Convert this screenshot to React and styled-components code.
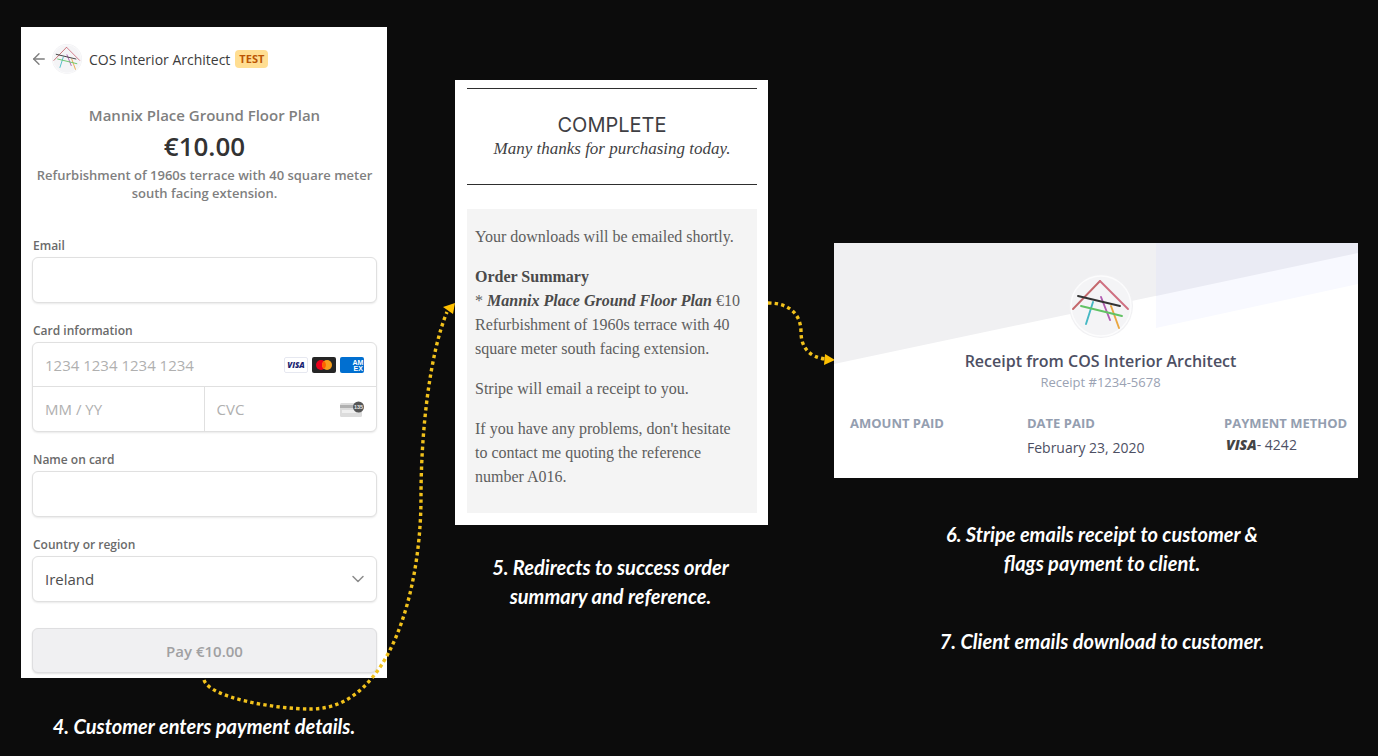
import React from "react";
import styled, { createGlobalStyle } from "styled-components";
import { ArrowLeft, ChevronDown } from "lucide-react";

const ui = `"Open Sans", "Noto Sans", sans-serif`;
const serif = `"Liberation Serif", serif`;

const GlobalStyle = createGlobalStyle`
  *, *::before, *::after { box-sizing: border-box; }
  body { margin: 0; background: #0c0c0c; font-family: ${ui}; }
  h1, h2, p, dl, dd, dt, figure { margin: 0; font-weight: inherit; }
`;

const Board = styled.main`
  display: grid;
  grid-template-columns: 366fr 68px 313fr 66px 524fr;
  align-items: start;
  padding: 27px 20px 0 21px;
`;

const Step = styled.figure`
  grid-column: ${(p) => p.$column};
  position: relative;
  min-width: 0;
  padding-top: ${(p) => p.$drop || 0}px;
`;

const Caption = styled.figcaption`
  padding: ${(p) => p.$pad};
  font: italic 700 20px/29px Lato, sans-serif;
  color: #fff;
  text-align: center;

  p + p { margin-top: 49px; }
`;

const Arrow = styled.svg`
  position: absolute;
  top: ${(p) => p.$top}px;
  left: ${(p) => p.$left};
  width: ${(p) => p.$width};
  height: ${(p) => p.$height}px;
  pointer-events: none;
  overflow: visible;
`;

const Checkout = styled.form`
  background: #fff;
  padding: 17px 10px 5px 11px;
`;

const Merchant = styled.header`
  display: flex;
  align-items: center;
  height: 30px;
  font-size: 14px;
  font-weight: 500;
  color: #3c3c3c;
`;

const BackLink = styled.a`
  display: flex;
  margin: 0 4px 0 -2px;
  color: #7d7d7d;
`;

const MerchantName = styled.span`
  margin: 0 5px 0 7px;
`;

const TestBadge = styled.span`
  padding: 0 4px;
  border-radius: 4px;
  background: #ffde92;
  color: #bb5504;
  font-size: 11px;
  font-weight: 700;
  line-height: 18px;
`;

const Product = styled.section`
  padding: 29px 0 33px;
  text-align: center;
  font-weight: 600;
  color: #7f7f7f;
`;

const ProductName = styled.h1`
  font-size: 15px;
  line-height: 24px;
`;

const Price = styled.p`
  font-size: 26px;
  line-height: 39px;
  color: #333;
`;

const ProductText = styled.p`
  font-size: 13px;
  line-height: 18px;
`;

const Field = styled.div`
  display: flex;
  flex-direction: column;
  margin-bottom: ${(p) => (p.$last ? 26 : 17)}px;
`;

const Label = styled.label`
  padding-left: 1px;
  font-size: 12px;
  font-weight: 600;
  line-height: 22px;
  color: #6a6a6a;
`;

const frame = `
  border: 1px solid #e0e0e0;
  border-radius: 6px;
  background: #fff;
  box-shadow: 0 1px 2px rgba(0, 0, 0, 0.09);
`;

const Input = styled.input`
  ${frame}
  width: 100%;
  height: 46px;
  padding: 0 12px;
  font: 15px ${ui};
  color: #4d4d4d;
`;

const CardGroup = styled.div`
  ${frame}
  display: grid;
  grid-template-columns: repeat(2, minmax(0, 1fr));
`;

const CardCell = styled.div`
  display: flex;
  align-items: center;
  height: 44px;
  padding: 0 12px;
  gap: 4px;
  ${(p) => p.$wide && "grid-column: 1 / -1; border-bottom: 1px solid #e0e0e0;"}
  ${(p) => p.$divided && "border-right: 1px solid #e0e0e0;"}

  svg { flex: none; }
`;

const CardInput = styled.input`
  flex: 1;
  min-width: 0;
  padding: 0;
  border: 0;
  background: none;
  font: 15px ${ui};
  color: #4d4d4d;

  &::placeholder { color: #b0b0b0; opacity: 1; }
`;

const SelectWrap = styled.div`
  ${frame}
  display: flex;
  align-items: center;
  position: relative;
  color: #8c8c8c;

  svg {
    position: absolute;
    right: 8px;
    pointer-events: none;
  }
`;

const Select = styled.select`
  appearance: none;
  width: 100%;
  height: 44px;
  padding: 0 12px;
  border: 0;
  background: none;
  font: 15px ${ui};
  color: #4d4d4d;
`;

const PayButton = styled.button`
  display: block;
  width: 100%;
  height: 45px;
  border: 1px solid #dedee0;
  border-radius: 6px;
  background: #f0f0f2;
  box-shadow: 0 1px 2px rgba(0, 0, 0, 0.12);
  font: 600 15px ${ui};
  color: #a0a0a2;
`;

const OrderCard = styled.article`
  padding: 8px 11px 12px 12px;
  background: #fff;
`;

const OrderHeader = styled.header`
  height: 97px;
  padding-top: 24px;
  border: solid #2e2e2e;
  border-width: 1px 0;
  text-align: center;
  color: #3f3f44;
`;

const OrderTitle = styled.h2`
  font: 400 20px/24px Inter, sans-serif;
`;

const Thanks = styled.p`
  font: italic 17px/24px ${serif};
`;

const OrderBody = styled.section`
  display: grid;
  gap: 16px;
  margin-top: 24px;
  padding: 16px 12px 24px 8px;
  background: #f4f4f4;
  font: 16px/24px ${serif};
  color: #5e5e5e;

  strong, em { color: #4a4a4a; }
  em { font-weight: 700; }
`;

const Receipt = styled.article`
  position: relative;
  min-height: 235px;
  padding: 31px 7px 18px 16px;
  background: #fff;
`;

const Backdrop = styled.svg`
  position: absolute;
  inset: 0 0 auto;
  width: 100%;
  height: 121px;
`;

const ReceiptHead = styled.header`
  position: relative;
  display: flex;
  flex-direction: column;
  align-items: center;
  color: #4d4f63;
`;

const ReceiptTitle = styled.h2`
  margin-top: 11px;
  font-size: 16px;
  font-weight: 600;
  line-height: 24px;
`;

const ReceiptNumber = styled.p`
  font-size: 13px;
  line-height: 18px;
  color: #9aa2b3;
`;

const Facts = styled.dl`
  display: grid;
  grid-template-columns: 177fr 197fr 127px;
  margin-top: 22px;
`;

const FactName = styled.dt`
  font-size: 13px;
  font-weight: 700;
  line-height: 20px;
  white-space: nowrap;
  color: #949eb0;
`;

const FactValue = styled.dd`
  padding: ${(p) => (p.$mark ? "2px 0 0 2px" : "5px 0 0")};
  font-size: 14px;
  line-height: 20px;
  color: #4d4f63;
`;

const VisaMark = styled.b`
  font-style: italic;
  font-weight: 800;
  color: #444;
`;

function Logo({ size }) {
  return (
    <svg width={size} height={size} viewBox="0 0 64 64" fill="none" aria-hidden="true">
      <circle cx="32" cy="32" r="32" fill="#f1f1f3" />
      <circle cx="32" cy="32" r="30" fill="#f4f4f6" stroke="#fcfcfd" strokeWidth="1.5" />
      <g strokeWidth="1.9" strokeLinecap="round">
        <path d="M4 35 31 7" stroke="#c4686c" />
        <path d="M31 7 59 35" stroke="#cf6f80" />
        <path d="M24 28 17 50" stroke="#45b8c4" />
        <path d="M32 23 41 46" stroke="#b05bb0" />
        <path d="M42 32 50 54" stroke="#eaa640" />
        <path d="M12 32 53 42" stroke="#62c264" />
        <path d="M9 22 51 32" stroke="#333" />
      </g>
    </svg>
  );
}

function Visa() {
  return (
    <svg width="24" height="16" viewBox="0 0 24 16" role="img" aria-label="Visa">
      <rect x="0.5" y="0.5" width="23" height="15" rx="1.5" fill="#fff" stroke="#e6e8f0" />
      <text x="12" y="11" textAnchor="middle" fontFamily="Open Sans" fontSize="8" fontWeight="800" fontStyle="italic" fill="#1a1f71">VISA</text>
    </svg>
  );
}

function Mastercard() {
  return (
    <svg width="24" height="16" viewBox="0 0 24 16" role="img" aria-label="Mastercard">
      <rect width="24" height="16" rx="2" fill="#252525" />
      <circle cx="9" cy="8" r="5" fill="#eb001b" />
      <circle cx="15" cy="8" r="5" fill="#f79e1b" />
      <path d="M12 4a5 5 0 0 1 0 8 5 5 0 0 1 0-8" fill="#ff5f00" />
    </svg>
  );
}

function Amex() {
  return (
    <svg width="24" height="16" viewBox="0 0 24 16" role="img" aria-label="American Express">
      <rect width="24" height="16" rx="2" fill="#016fd0" />
      <g fontFamily="Liberation Sans" fontSize="7" fontWeight="700" fill="#fff">
        <text x="12.5" y="8">AM</text>
        <text x="13.5" y="14">EX</text>
      </g>
    </svg>
  );
}

function CvcCard() {
  return (
    <svg width="24" height="17" viewBox="0 0 24 17" aria-hidden="true">
      <rect y="2" width="22" height="14" rx="1.5" fill="#dcdcdc" />
      <rect y="4" width="22" height="3" fill="#b0b0b0" />
      <rect x="2" y="9" width="16" height="3" fill="#efefef" />
      <circle cx="18.5" cy="6" r="5.5" fill="#555" />
      <text x="18.5" y="8" textAnchor="middle" fontFamily="Liberation Sans" fontSize="5.5" fontWeight="700" fill="#e8e8e8">135</text>
    </svg>
  );
}

const dots = { fill: "none", stroke: "#f2c21c", strokeWidth: 3.4, strokeDasharray: "3.4 3.2" };

export default function App() {
  return (
    <>
      <GlobalStyle />
      <Board>
        <Step $column="1">
          <Checkout onSubmit={(e) => e.preventDefault()}>
            <Merchant>
              <BackLink href="#back" aria-label="Back"><ArrowLeft size={18} strokeWidth={1.8} /></BackLink>
              <Logo size={30} />
              <MerchantName>COS Interior Architect</MerchantName>
              <TestBadge>TEST</TestBadge>
            </Merchant>
            <Product>
              <ProductName>Mannix Place Ground Floor Plan</ProductName>
              <Price>€10.00</Price>
              <ProductText>Refurbishment of 1960s terrace with 40 square meter south facing extension.</ProductText>
            </Product>
            <Field>
              <Label htmlFor="email">Email</Label>
              <Input id="email" type="email" />
            </Field>
            <Field>
              <Label htmlFor="card">Card information</Label>
              <CardGroup>
                <CardCell $wide>
                  <CardInput id="card" placeholder="1234 1234 1234 1234" />
                  <Visa /><Mastercard /><Amex />
                </CardCell>
                <CardCell $divided>
                  <CardInput aria-label="Expiry date" placeholder="MM / YY" />
                </CardCell>
                <CardCell>
                  <CardInput aria-label="Security code" placeholder="CVC" />
                  <CvcCard />
                </CardCell>
              </CardGroup>
            </Field>
            <Field>
              <Label htmlFor="name">Name on card</Label>
              <Input id="name" />
            </Field>
            <Field $last>
              <Label htmlFor="country">Country or region</Label>
              <SelectWrap>
                <Select id="country" defaultValue="Ireland"><option>Ireland</option></Select>
                <ChevronDown size={20} strokeWidth={1.8} />
              </SelectWrap>
            </Field>
            <PayButton type="submit" disabled>Pay €10.00</PayButton>
          </Checkout>
          <Caption $pad="34px 0 0">4. Customer enters payment details.</Caption>
          <Arrow $top={276} $left="50%" $width="calc(50% + 68px)" $height={410} viewBox="0 0 251 410" preserveAspectRatio="none" aria-hidden="true">
            <path {...dots} d="M0 377C6 395 71 406 107 406C186 406 217 287 217 194C217 127 226 50 243 9" />
            <path fill="#ffc000" d="M251 0 239 4 249 11Z" />
          </Arrow>
        </Step>

        <Step $column="3" $drop={53}>
          <OrderCard>
            <OrderHeader>
              <OrderTitle>COMPLETE</OrderTitle>
              <Thanks>Many thanks for purchasing today.</Thanks>
            </OrderHeader>
            <OrderBody>
              <p>Your downloads will be emailed shortly.</p>
              <p>
                <strong>Order Summary</strong><br />
                * <em>Mannix Place Ground Floor Plan</em> €10<br />
                Refurbishment of 1960s terrace with 40 square meter south facing extension.
              </p>
              <p>Stripe will email a receipt to you.</p>
              <p>If you have any problems, don't hesitate to contact me quoting the reference number A016.</p>
            </OrderBody>
          </OrderCard>
          <Caption $pad="28px 34px 0 32px">5. Redirects to success order summary and reference.</Caption>
          <Arrow $top={273} $left="100%" $width="66px" $height={66} viewBox="0 0 66 66" aria-hidden="true">
            <path {...dots} d="M0 3C22 3 33 15 33 32C33 48 42 57 57 59" />
            <path fill="#ffc000" d="M57 54 67 60 56 65Z" />
          </Arrow>
        </Step>

        <Step $column="5" $drop={216}>
          <Receipt>
            <Backdrop viewBox="0 0 524 121" preserveAspectRatio="none" aria-hidden="true">
              <path fill="#f0f0f2" d="M0 0H524V10L0 121Z" />
              <path fill="#f8f9ff" d="M322 0H524V41L322 85Z" />
              <path fill="#eaebf4" d="M322 0H524V10L322 53Z" />
            </Backdrop>
            <ReceiptHead>
              <Logo size={64} />
              <ReceiptTitle>Receipt from COS Interior Architect</ReceiptTitle>
              <ReceiptNumber>Receipt #1234-5678</ReceiptNumber>
            </ReceiptHead>
            <Facts>
              <div>
                <FactName>AMOUNT PAID</FactName>
              </div>
              <div>
                <FactName>DATE PAID</FactName>
                <FactValue>February 23, 2020</FactValue>
              </div>
              <div>
                <FactName>PAYMENT METHOD</FactName>
                <FactValue $mark><VisaMark>VISA</VisaMark>- 4242</FactValue>
              </div>
            </Facts>
          </Receipt>
          <Caption $pad="42px 90px 0 102px">
            <p>6. Stripe emails receipt to customer &amp; flags payment to client.</p>
            <p>7. Client emails download to customer.</p>
          </Caption>
        </Step>
      </Board>
    </>
  );
}
